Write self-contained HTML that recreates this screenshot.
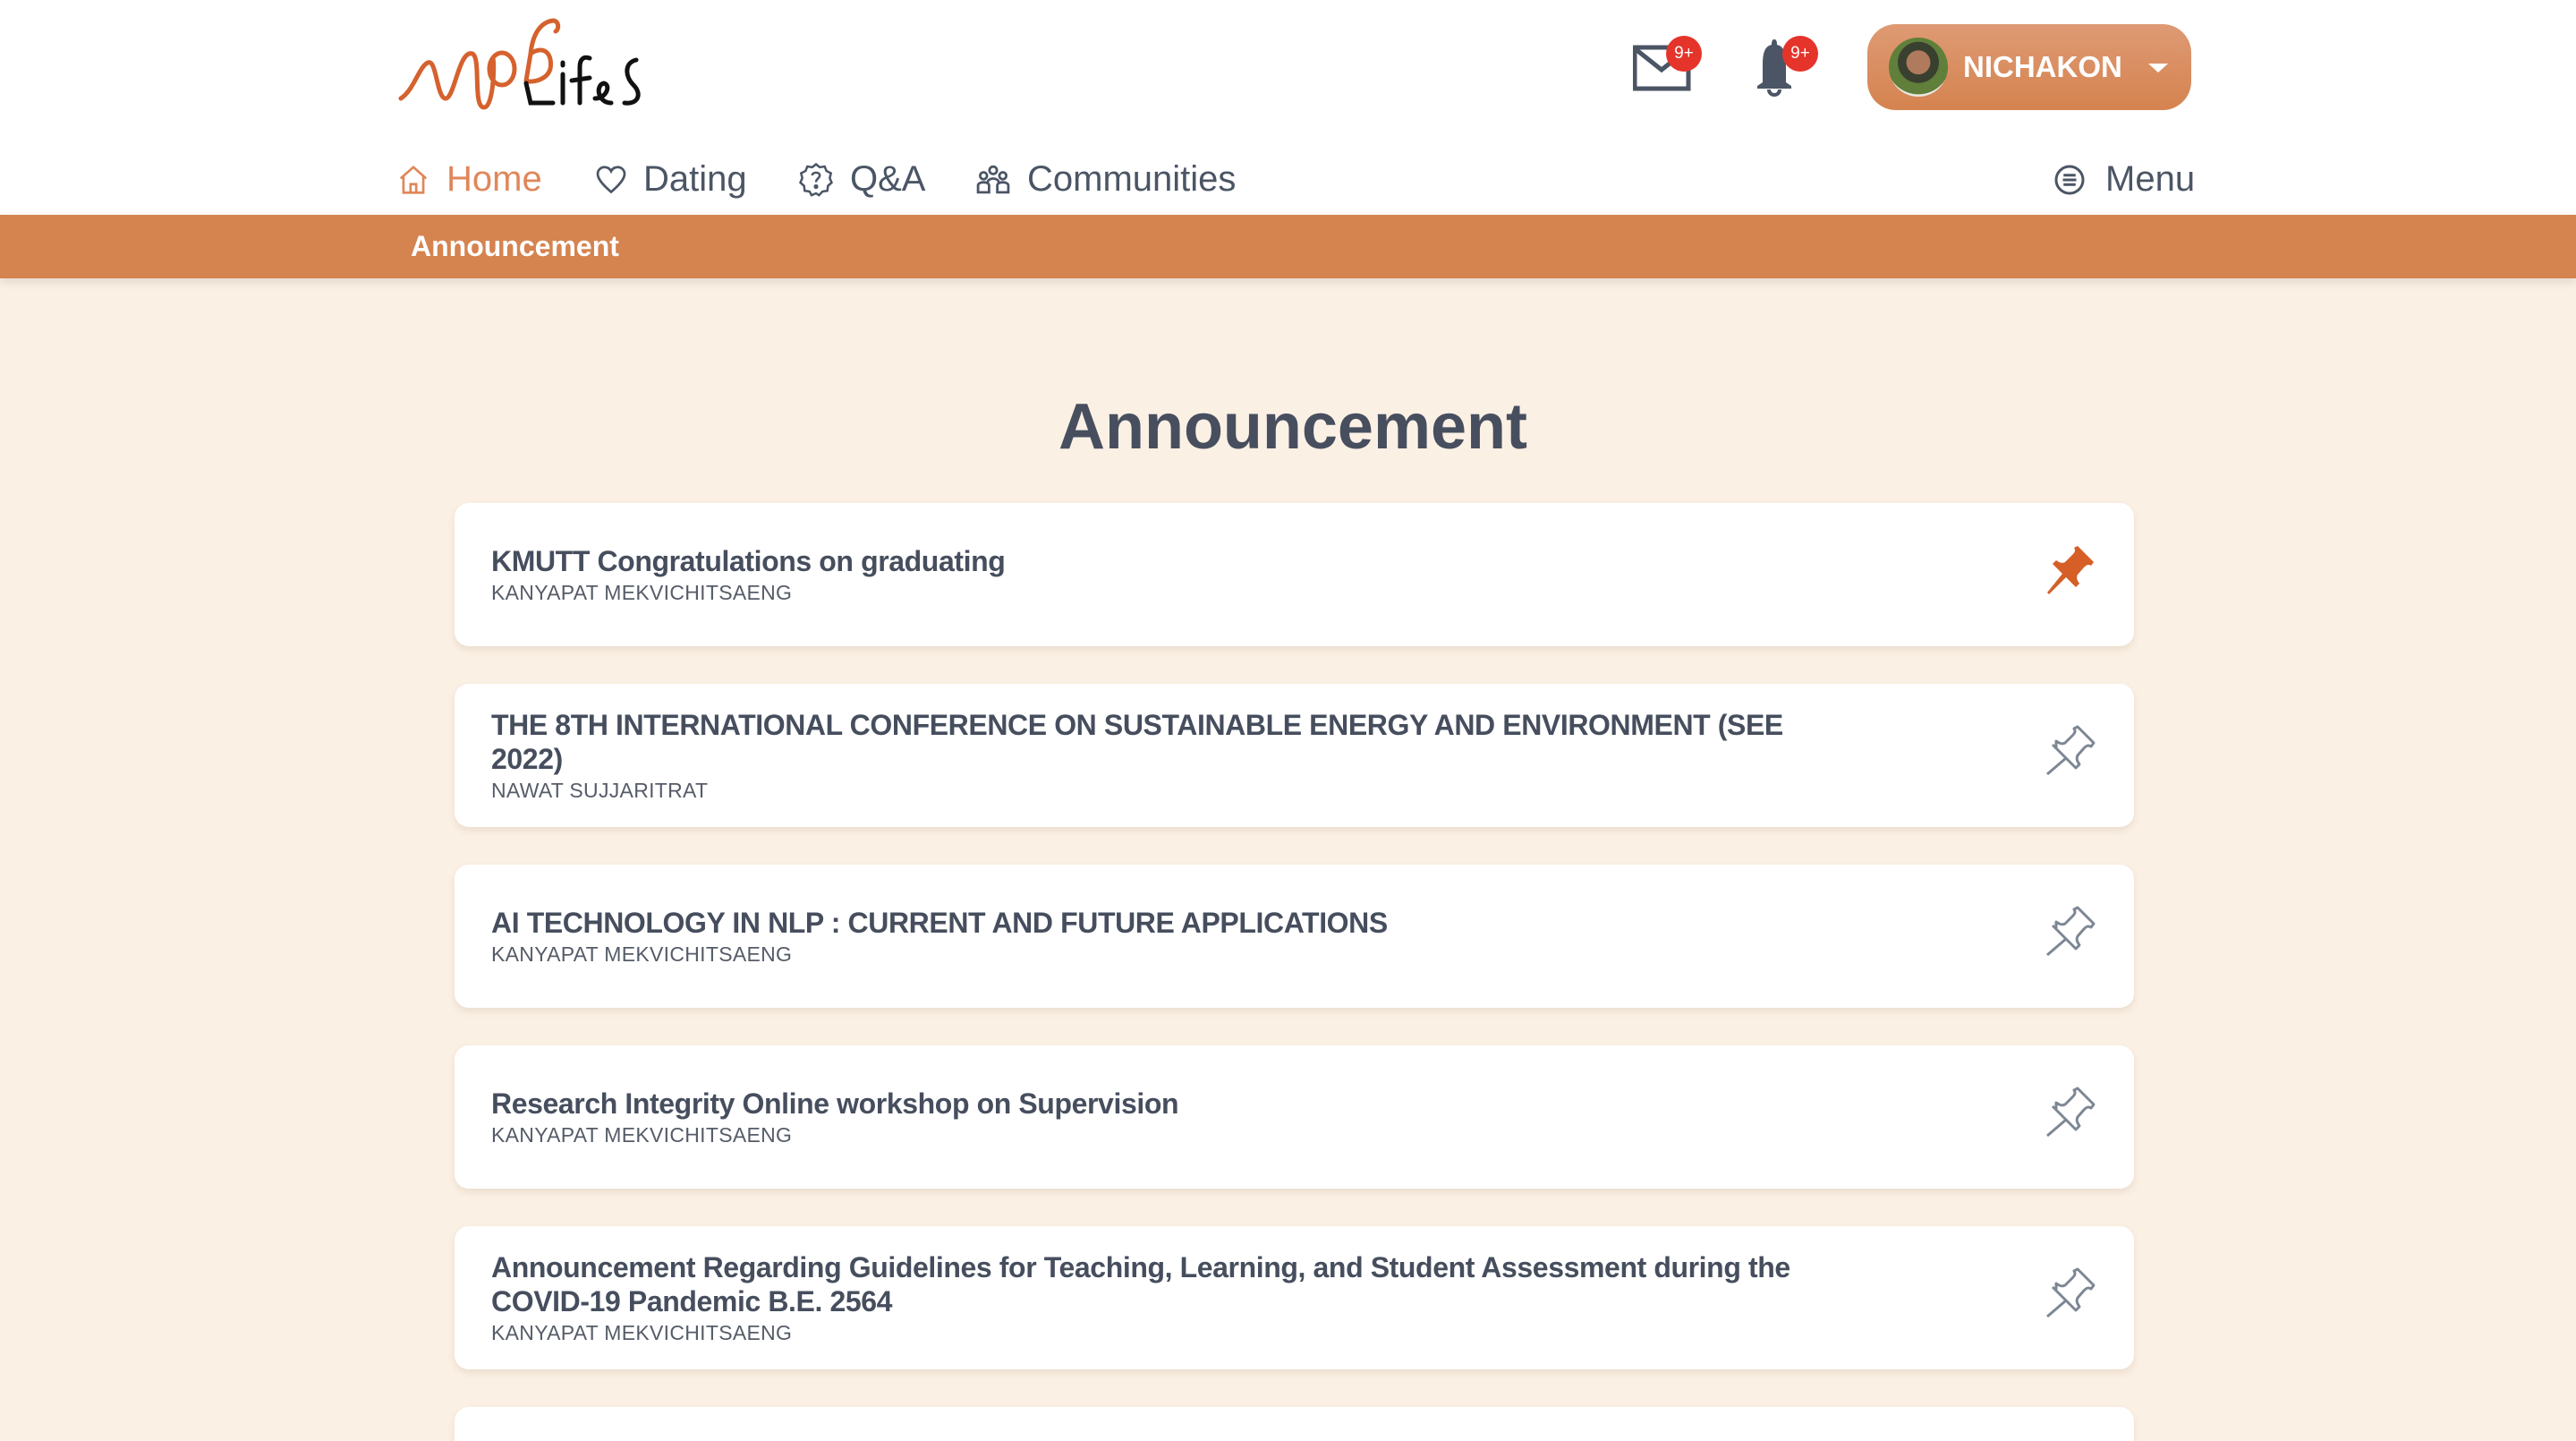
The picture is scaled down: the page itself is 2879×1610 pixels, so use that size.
<!DOCTYPE html>
<html style="width:2879px;height:1610px;overflow:hidden"><head><meta charset="utf-8">
<style>
*{margin:0;padding:0;box-sizing:border-box}
body{width:2879px;height:1610px;overflow:hidden;background:#FBF0E4;font-family:"Liberation Sans",sans-serif;position:relative;color:#474f5f}
.hdr{position:absolute;left:0;top:0;width:2879px;height:240px;background:#fff}
.bar{position:absolute;left:0;top:240px;width:2879px;height:71px;background:#D5834F;box-shadow:0 4px 10px rgba(0,0,0,.1)}
.bar span{position:absolute;left:459px;top:17px;font-size:32px;font-weight:bold;color:#fff}
.nav{position:absolute;top:178px;font-size:40px;color:#4b5565;display:flex;align-items:center}
.nav svg{margin-right:18px}
.btn{position:absolute;left:2087px;top:27px;width:362px;height:96px;border-radius:32px;background:linear-gradient(#DE9A74,#D5834F)}
.av{position:absolute;left:24px;top:15px;width:66px;height:66px;border-radius:50%;background:radial-gradient(circle at 50% 42%,#b07a5c 0 26%,#3a4030 27% 45%,#5f7f3a 46% 70%,#e8e8e0 71%)}
.btn b{position:absolute;left:107px;top:29px;font-size:33px;color:#fff}
.car{position:absolute;left:314px;top:44px;border-left:11px solid transparent;border-right:11px solid transparent;border-top:10px solid #fff}
.badge{position:absolute;width:40px;height:40px;border-radius:50%;background:#E5342A;color:#fff;font-size:19px;text-align:center;line-height:40px}
h1{position:absolute;left:0;width:2890px;text-align:center;top:436px;font-size:72px;color:#474f5f}
.card{position:absolute;left:508px;width:1877px;height:160px;background:#fff;border-radius:16px;box-shadow:0 4px 8px rgba(120,90,60,.12);display:flex;align-items:center}
.card .t{margin-left:41px;width:1600px}
.card .t div{font-size:32px;font-weight:bold;line-height:38px;color:#464e5e;letter-spacing:-0.4px}
.card .t p{font-size:23px;color:#555c68;margin-top:3px;letter-spacing:.3px}
.pin{position:absolute;left:1776px;top:50%;margin-top:-36px}
</style></head><body>
<div class="hdr"></div>
<svg style="position:absolute;left:443px;top:15px" width="310" height="115" viewBox="0 0 310 115">
<path d="M5 95 C20 85,25 60,35 55 C45 50,45 95,55 95 C65 95,70 40,85 45 C95 50,85 105,98 105 C108 105,110 60,108 50" fill="none" stroke="#D5622E" stroke-width="5" stroke-linecap="round"/>
<ellipse cx="118" cy="62" rx="14" ry="18" fill="none" stroke="#D5622E" stroke-width="5"/>
<path d="M145 75 L150 45 C165 35,175 45,172 62 C168 75,150 78,145 75 M150 45 C152 25,160 10,175 8 C182 8,182 18,178 20" fill="none" stroke="#D5622E" stroke-width="5" stroke-linecap="round"/>
<path d="M145 78 L150 100 L175 100 M186 68 L186 100 M186 55 L186 58 M205 100 L205 60 C205 50,210 48,216 50 M196 75 L216 72 M222 95 C235 95,240 80,232 78 C222 80,225 100,240 100 M268 52 C255 55,255 70,265 80 C275 90,270 102,255 100" fill="none" stroke="#111" stroke-width="5" stroke-linecap="round"/>
</svg>
<div class="nav" style="left:443px;color:#E0875A"><svg width="38" height="38" viewBox="0 0 24 24" fill="none" stroke="#E0875A" stroke-width="1.7"><path d="M3 11 L12 3 L21 11 M5 9 V21 H19 V9 M10 21 V15 H14 V21"/></svg>Home</div>
<div class="nav" style="left:665px"><svg width="36" height="36" viewBox="0 0 24 24" fill="none" stroke="#4b5565" stroke-width="1.8"><path d="M12 21 C5 15,2 11,2 7.5 C2 4.5,4.5 2.5,7 2.5 C9 2.5,11 3.5,12 5.5 C13 3.5,15 2.5,17 2.5 C19.5 2.5,22 4.5,22 7.5 C22 11,19 15,12 21Z"/></svg>Dating</div>
<div class="nav" style="left:892px"><svg width="40" height="40" viewBox="0 0 24 24" fill="none" stroke="#4b5565" stroke-width="1.5"><path d="M12 1.5 L14.5 3.5 L17.8 3 L19 6 L22 7.5 L21.2 10.8 L22.5 13.8 L20 16 L19.6 19.3 L16.3 19.8 L14 22.3 L12 21 L9 22.3 L7.7 19.8 L4.4 19.3 L4 16 L1.5 13.8 L2.8 10.8 L2 7.5 L5 6 L6.2 3 L9.5 3.5Z"/><path d="M9.5 9 C9.5 6.5,14.5 6.5,14.5 9 C14.5 11,12 11,12 13.5"/><circle cx="12" cy="16.5" r=".8" fill="#4b5565"/></svg>Q&amp;A</div>
<div class="nav" style="left:1090px"><svg width="40" height="36" viewBox="0 0 26 22" fill="none" stroke="#4b5565" stroke-width="1.8"><circle cx="13" cy="4" r="2.7"/><circle cx="6" cy="8" r="2.5"/><circle cx="20" cy="8" r="2.5"/><path d="M2 20 V15 C2 12,10 12,10 15 V20 Z M16 20 V15 C16 12,24 12,24 15 V20Z M9 13 C9 9,17 9,17 13"/></svg>Communities</div>
<div class="nav" style="left:2295px"><svg width="36" height="36" viewBox="0 0 24 24" fill="none" stroke="#4b5565" stroke-width="2"><circle cx="12" cy="12" r="10"/><path d="M7.5 8.5 H16.5 M7 12 H17 M7.5 15.5 H16.5"/></svg><span style="margin-left:4px">Menu</span></div>
<svg style="position:absolute;left:1825px;top:50px" width="66" height="52" viewBox="0 0 66 52"><rect x="2" y="3" width="60" height="46" fill="none" stroke="#4b5565" stroke-width="5"/><path d="M3 5 L32 28 L61 5" fill="none" stroke="#4b5565" stroke-width="5"/></svg>
<div class="badge" style="left:1862px;top:40px">9+</div>
<svg style="position:absolute;left:1962px;top:44px" width="42" height="64" viewBox="0 0 42 64"><path d="M21 0 C24 0,24 4,24 6 C33 8,34 18,34 30 L34 48 L40 52 L40 55 L2 55 L2 52 L8 48 L8 30 C8 18,9 8,18 6 C18 4,18 0,21 0Z" fill="#4b5565"/><path d="M15 56 C15 64,27 64,27 56" fill="none" stroke="#4b5565" stroke-width="4"/></svg>
<div class="badge" style="left:1992px;top:40px">9+</div>
<div class="btn"><div class="av"></div><b>NICHAKON</b><div class="car"></div></div>
<div class="bar"><span>Announcement</span></div>
<h1>Announcement</h1>

<div class="card" style="top:562px"><div class="t"><div>KMUTT Congratulations on graduating</div><p>KANYAPAT MEKVICHITSAENG</p></div>
<svg class="pin" width="60" height="60" viewBox="0 0 60 60"><path d="M38 4 L56 22 L53 26 C50 24,48 25,45 28 L38 36 C36 40,38 43,40 46 L36 50 L25 39 L6 58 L4 56 L21 35 L10 24 L14 20 C17 22,20 24,24 22 L32 14 C35 11,36 9,34 6Z" fill="#D55F27"/></svg></div>

<div class="card" style="top:764px"><div class="t"><div>THE 8TH INTERNATIONAL CONFERENCE ON SUSTAINABLE ENERGY AND ENVIRONMENT (SEE<br>2022)</div><p>NAWAT SUJJARITRAT</p></div>
<svg class="pin" width="60" height="60" viewBox="0 0 60 60"><path d="M38 4 L56 22 L53 26 C50 24,48 25,45 28 L38 36 C36 40,38 43,40 46 L36 50 L14 28 L14 20 C17 22,20 24,24 22 L32 14 C35 11,36 9,34 6Z M10 24 L36 50 M25 39 L4 57" fill="none" stroke="#7d8794" stroke-width="3" stroke-linejoin="round"/></svg></div>

<div class="card" style="top:966px"><div class="t"><div>AI TECHNOLOGY IN NLP : CURRENT AND FUTURE APPLICATIONS</div><p>KANYAPAT MEKVICHITSAENG</p></div>
<svg class="pin" width="60" height="60" viewBox="0 0 60 60"><path d="M38 4 L56 22 L53 26 C50 24,48 25,45 28 L38 36 C36 40,38 43,40 46 L36 50 L14 28 L14 20 C17 22,20 24,24 22 L32 14 C35 11,36 9,34 6Z M10 24 L36 50 M25 39 L4 57" fill="none" stroke="#7d8794" stroke-width="3" stroke-linejoin="round"/></svg></div>

<div class="card" style="top:1168px"><div class="t"><div>Research Integrity Online workshop on Supervision</div><p>KANYAPAT MEKVICHITSAENG</p></div>
<svg class="pin" width="60" height="60" viewBox="0 0 60 60"><path d="M38 4 L56 22 L53 26 C50 24,48 25,45 28 L38 36 C36 40,38 43,40 46 L36 50 L14 28 L14 20 C17 22,20 24,24 22 L32 14 C35 11,36 9,34 6Z M10 24 L36 50 M25 39 L4 57" fill="none" stroke="#7d8794" stroke-width="3" stroke-linejoin="round"/></svg></div>

<div class="card" style="top:1370px"><div class="t"><div>Announcement Regarding Guidelines for Teaching, Learning, and Student Assessment during the<br>COVID-19 Pandemic B.E. 2564</div><p>KANYAPAT MEKVICHITSAENG</p></div>
<svg class="pin" width="60" height="60" viewBox="0 0 60 60"><path d="M38 4 L56 22 L53 26 C50 24,48 25,45 28 L38 36 C36 40,38 43,40 46 L36 50 L14 28 L14 20 C17 22,20 24,24 22 L32 14 C35 11,36 9,34 6Z M10 24 L36 50 M25 39 L4 57" fill="none" stroke="#7d8794" stroke-width="3" stroke-linejoin="round"/></svg></div>

<div class="card" style="top:1572px;height:38px;border-radius:16px 16px 0 0"></div>
</body></html>
